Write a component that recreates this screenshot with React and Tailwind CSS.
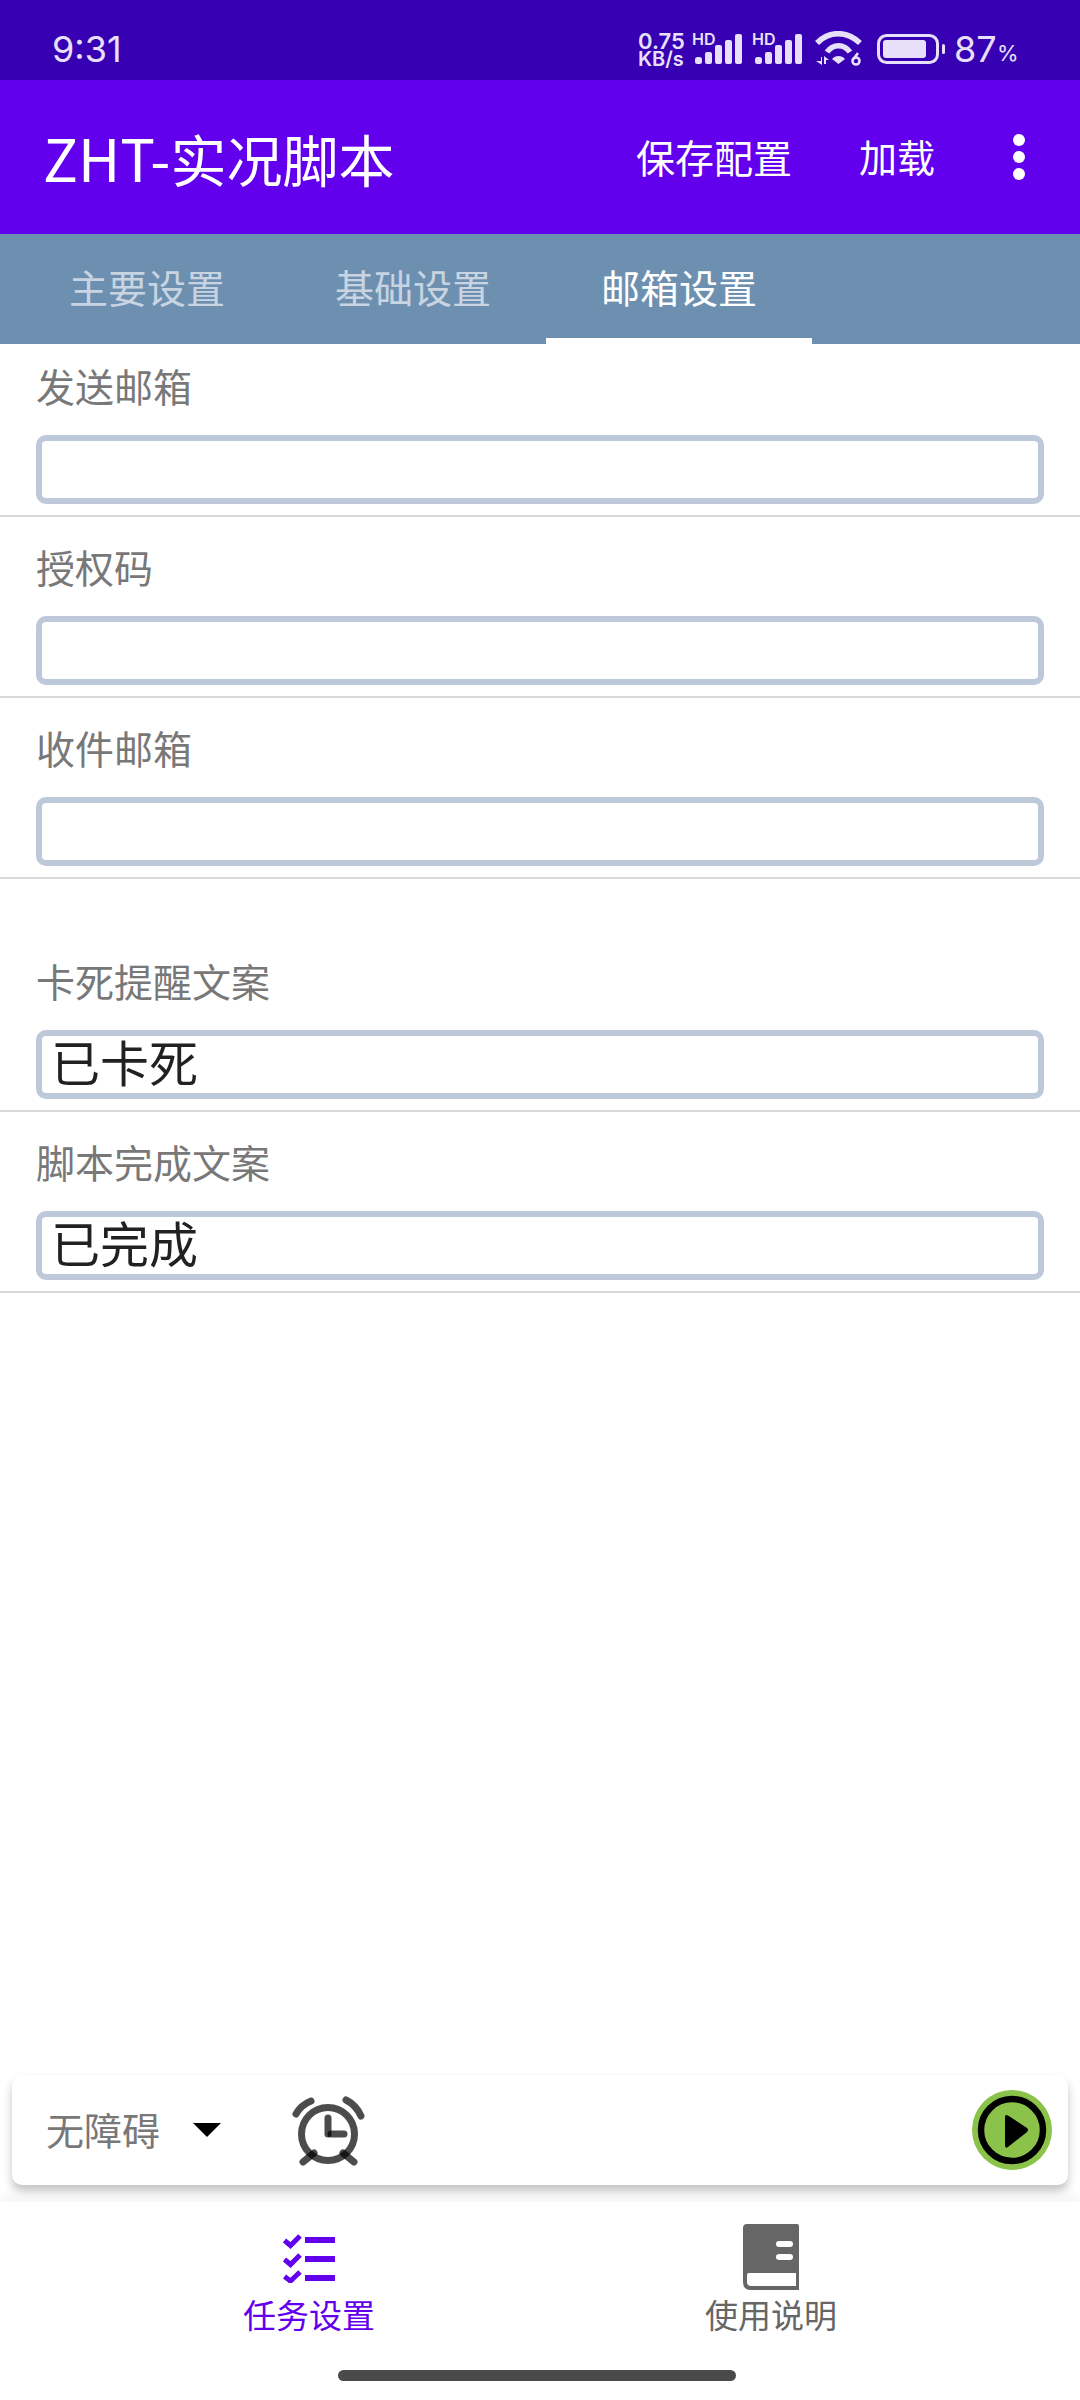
import React from 'react'

const FIELDS = [
  { label: '发送邮箱', value: '' },
  { label: '授权码', value: '' },
  { label: '收件邮箱', value: '' },
]
const COPY_FIELDS = [
  { label: '卡死提醒文案', value: '已卡死' },
  { label: '脚本完成文案', value: '已完成' },
]
const FONT = "font-['Noto_Sans_CJK_SC','Noto_Sans',sans-serif]"

function Signal() {
  return (
    <div className="relative w-[47px] h-[34px]">
      <span className="absolute left-[-3px] top-[-1px] text-[16px] leading-[16px] font-semibold font-['Inter',sans-serif] text-[#e8e0fa]">HD</span>
      <svg className="absolute left-0 top-0" width="47" height="34" viewBox="0 0 47 34" fill="#e8e0fa">
        <rect x="0" y="25" width="7" height="7" rx="2.5" />
        <rect x="10" y="20" width="7" height="12" rx="2" />
        <rect x="20" y="13" width="7" height="19" rx="2" />
        <rect x="30" y="8" width="7" height="24" rx="2" />
        <rect x="40" y="2" width="7" height="30" rx="2" />
      </svg>
    </div>
  )
}

function Wifi() {
  return (
    <svg width="48" height="36" viewBox="0 0 48 36" fill="none" stroke="#e8e0fa">
      <path d="M2 12 C14 -0.5 32 -0.5 45 12" strokeWidth="5.5" />
      <path d="M12 21 C18 12.5 29 12.5 35 21" strokeWidth="5.5" />
      <path d="M17 28 C20 24 27 24 30 28 L23.5 33 Z" fill="#e8e0fa" stroke="none" />
      <path d="M1 30 L6 30 L6 26 L7 26 L7 34 Z M9 25 L9 33 L11 33 L11 29 L14 29 Z" fill="#e8e0fa" stroke="none" />
      <circle cx="41" cy="30" r="3.5" strokeWidth="2.6" />
      <path d="M43 22 L38.5 28" strokeWidth="2.6" />
    </svg>
  )
}

function Battery() {
  return (
    <svg width="68" height="30" viewBox="0 0 68 30" fill="none">
      <rect x="1.5" y="1.5" width="59" height="27" rx="8" stroke="#e8e0fa" strokeWidth="3" />
      <rect x="6" y="6" width="43" height="18" rx="3" fill="#e8e0fa" />
      <rect x="65" y="10" width="3" height="10" rx="1.5" fill="#e8e0fa" />
    </svg>
  )
}

function StatusBar() {
  return (
    <div className="h-[80px] bg-[#3700b3] flex items-center justify-between pt-[18px] pl-[52px] pr-[64px] text-[#e8e0fa] font-['Inter',sans-serif]">
      <span className="text-[36px] leading-none">9:31</span>
      <div className="flex items-center">
        <div className="flex flex-col items-start font-semibold w-[57px]">
          <span className="text-[22px] leading-[20px]">0.75</span>
          <span className="text-[20px] leading-[17px]">KB/s</span>
        </div>
        <Signal />
        <div className="w-[13px]" />
        <Signal />
        <div className="w-[13px]" />
        <Wifi />
        <div className="w-[14px]" />
        <Battery />
        <span className="ml-[9px] w-[40px] text-[36px] leading-none">87</span>
        <span className="ml-[3px] w-[19px] mt-[8px] text-[22px] leading-none">%</span>
      </div>
    </div>
  )
}

function AppBar() {
  return (
    <div className="h-[154px] bg-[#6200ee] flex items-center pl-[43px] text-white">
      <h1 className="flex-1 text-[56px] leading-none font-normal"><span className="text-[58px]">ZHT-</span>实况脚本</h1>
      <span className="text-[39px] leading-none mb-[2px]">保存配置</span>
      <span className="ml-[67px] text-[38px] leading-none mb-[2px]">加载</span>
      <div className="ml-[78px] mr-[55px] flex flex-col gap-[5px]">
        <span className="w-[12px] h-[12px] rounded-full bg-white" />
        <span className="w-[12px] h-[12px] rounded-full bg-white" />
        <span className="w-[12px] h-[12px] rounded-full bg-white" />
      </div>
    </div>
  )
}

function Tabs() {
  const tabs = ['主要设置', '基础设置', '邮箱设置']
  return (
    <div className="relative h-[110px] bg-[#6e90b0] pl-[14px] flex">
      {tabs.map((t, i) => (
        <div key={t}
          className={`w-[266px] flex items-center justify-center text-[39px] leading-none border-b-[6px] ${i === 2 ? 'text-white border-white' : 'text-[#c8d4e2] border-transparent'}`}>
          {t}
        </div>
      ))}
    </div>
  )
}

function Field({ label, value }) {
  return (
    <div className="h-[181px] border-b-2 border-[#d9d9d9] px-[36px] flex flex-col">
      <div className="h-[99px] pt-[26px] text-[39px] leading-[46px] text-[#787878]">{label}</div>
      <div className="w-[1008px] h-[69px] border-[6px] border-[#bdc8d9] rounded-[10px] flex items-center pl-[9px] pb-[9px] text-[49px] leading-none text-[#212121] bg-white">
        {value}
      </div>
    </div>
  )
}

function AlarmIcon() {
  return (
    <svg width="75" height="75" viewBox="0 0 75 75" fill="none" stroke="rgba(0,0,0,0.7)" strokeLinecap="round" strokeWidth="7">
      <circle cx="37" cy="38" r="26.5" />
      <path d="M5 18 Q10 9 20 5" />
      <path d="M55 4 Q65 9 70 20" />
      <path d="M12 66 L23 57" />
      <path d="M63 66 L52 57" />
      <path d="M37 22 L37 38" />
      <path d="M40 38 L53 38" />
    </svg>
  )
}

function PlayButton() {
  return (
    <svg width="80" height="80" viewBox="0 0 80 80">
      <circle cx="40" cy="40" r="40" fill="#8bc34a" />
      <circle cx="40" cy="40" r="31" fill="none" stroke="#000" strokeWidth="6.5" />
      <path d="M33 27 Q33 24 36 25.5 L55 38 Q57 40 55 42 L36 57 Q33 59 33 55 Z" fill="#000" />
    </svg>
  )
}

function ActionBar() {
  return (
    <div className="mx-[12px] h-[110px] rounded-[10px] bg-white shadow-[0_6px_10px_rgba(0,0,0,0.24)] flex items-center pl-[34px] pr-[16px]">
      <span className="text-[38px] leading-none text-[#787878] mb-[3px]">无障碍</span>
      <svg className="ml-[33px] mb-[1px]" width="28" height="14" viewBox="0 0 28 14"><path d="M0 0 H28 L14 14 Z" fill="#000" /></svg>
      <div className="ml-[70px] mt-[6px]"><AlarmIcon /></div>
      <div className="ml-auto"><PlayButton /></div>
    </div>
  )
}

function ChecklistIcon() {
  return (
    <svg width="52" height="50" viewBox="0 0 52 50" fill="#6200ee">
      <g fill="none" stroke="#6200ee" strokeWidth="5">
        <path d="M1.5 7.5 L7.5 12.5 L17 3" />
        <path d="M1.5 26.5 L7.5 31.5 L17 22" />
        <path d="M1.5 43.5 L7.5 48 L17 39" />
      </g>
      <rect x="22" y="4" width="30" height="6" />
      <rect x="22" y="23" width="30" height="6" />
      <rect x="22" y="42" width="30" height="6" />
    </svg>
  )
}

function BookIcon() {
  return (
    <svg width="56" height="66" viewBox="0 0 56 66">
      <path d="M4 0 H54 Q56 0 56 2 V66 H8 Q0 66 0 58 V4 Q0 0 4 0 Z" fill="#666" />
      <path d="M6 49 H53 V62 H8 Q4 62 4 58 V51 Q4 49 6 49 Z" fill="#fff" />
      <rect x="33" y="17" width="17" height="6" rx="3" fill="#fff" />
      <rect x="33" y="30" width="17" height="6" rx="3" fill="#fff" />
    </svg>
  )
}

function BottomNav() {
  return (
    <div className="relative bg-white h-[198px] flex flex-col items-center shadow-[0_-6px_10px_rgba(0,0,0,0.04)]">
      <div className="w-[924px] grid grid-cols-2">
        <div className="flex flex-col items-center text-[#6200ee]">
          <div className="h-[96px] flex items-end pb-[15px]"><ChecklistIcon /></div>
          <span className="text-[33px] leading-[33px]">任务设置</span>
        </div>
        <div className="flex flex-col items-center text-[#666]">
          <div className="h-[96px] flex items-end pb-[8px]"><BookIcon /></div>
          <span className="text-[33px] leading-[33px]">使用说明</span>
        </div>
      </div>
      <div className="mt-[39px] -ml-[6px] w-[398px] h-[11px] rounded-full bg-[#4a4a4a]" />
    </div>
  )
}

export default function App() {
  return (
    <div className={`w-[1080px] h-[2400px] bg-white flex flex-col overflow-hidden ${FONT}`}>
      <StatusBar />
      <AppBar />
      <Tabs />
      <div className="flex-1 -mt-[8px]">
        {FIELDS.map(f => <Field key={f.label} {...f} />)}
        <div className="h-[52px]" />
        {COPY_FIELDS.map(f => <Field key={f.label} {...f} />)}
      </div>
      <ActionBar />
      <div className="h-[17px]" />
      <BottomNav />
    </div>
  )
}
